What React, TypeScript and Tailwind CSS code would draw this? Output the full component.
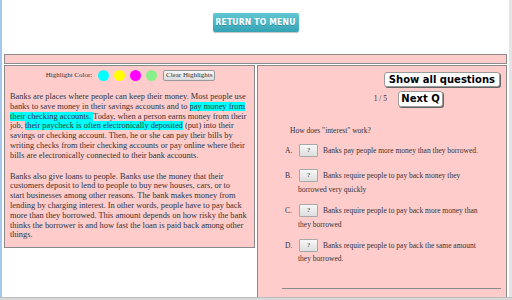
import React from 'react';

const serif = { fontFamily: '"Liberation Serif", "Times New Roman", serif' };

function QButton() {
  return (
    <span className="inline-block indent-0 w-[19px] h-[13px] align-top text-center leading-[11px] text-[7px] text-[#333] border border-[#a8a8a8] rounded-[1px] bg-gradient-to-b from-[#f7f7f7] to-[#dedede] mr-[5px]">
      ?
    </span>
  );
}

interface OptionProps {
  letter: string;
  text: string;
  mt: string;
}

function Option({ letter, text, mt }: OptionProps) {
  return (
    <div className={`${mt} pl-[40px] pr-[21px] indent-[-13px] text-[7.5px] leading-[13.5px] text-[#333]`}>
      <span className="inline-block indent-0 w-[14px]">{letter}</span>
      <QButton />
      {text}
    </div>
  );
}

export default function App() {
  const hlColors = ['bg-[#00ffff]', 'bg-[#ffff00]', 'bg-[#ff00ff]', 'bg-[#88f088]'];

  return (
    <div className="w-[512px] h-[300px] overflow-hidden flex flex-col bg-white" style={serif}>
      <div className="flex flex-1 min-h-0">
        {/* window frame */}
        <div className="w-[2px] bg-[#a6c6ea]" />
        <div className="w-[2px]" />

        <main className="flex-1 min-w-0 flex flex-col">
          {/* header */}
          <div className="h-[54px] flex justify-center pt-[13px]">
            <button
              className="w-[86px] h-[19px] rounded-[2px] bg-gradient-to-b from-[#62c6d4] to-[#34a4b5] shadow-[0_1px_1px_rgba(0,0,0,0.25)] text-white font-bold text-[8.5px] tracking-[0.2px] [text-shadow:0_1px_0_rgba(0,0,0,0.2)]"
              style={{ fontFamily: '"DejaVu Sans Condensed", "DejaVu Sans", sans-serif' }}
            >
              RETURN TO MENU
            </button>
          </div>

          {/* pink bar */}
          <div className="h-[10px] border border-[#8c8c8c] bg-[#ffcccc]" />

          {/* panels */}
          <div className="mt-[1px] flex gap-[2px] flex-1 min-h-0">
            {/* passage */}
            <div className="self-start w-[251px] border border-[#8a8a8a] bg-[#ffcccc] pl-[5px] pr-[3px] pt-[3px] pb-[7px] text-[#333]">
              <div className="flex items-center justify-center h-[13px]">
                <span className="text-[7px] mr-[6px]">Highlight Color:</span>
                {hlColors.map((c, i) => (
                  <span key={i} className={`inline-block w-[11px] h-[11px] rounded-full ${c} mr-[5px]`} />
                ))}
                <button className="ml-[1px] w-[52px] h-[11px] text-[7px] leading-[9px] text-[#333] border border-[#999] rounded-[2px] bg-gradient-to-b from-[#f6f6f6] to-[#dcdcdc]">
                  Clear Highlights
                </button>
              </div>

              <p className="mt-[10px] text-[8.4px] leading-[9.8px]">
                Banks are places where people can keep their money. Most people use banks to save money in their savings accounts and to{' '}
                <span className="bg-[#00ffff]">pay money from their checking accounts. </span>
                Today, when a person earns money from their job,{' '}
                <span className="bg-[#00ffff]">their paycheck is often electronically deposited</span>
                {' '}(put) into their savings or checking account. Then, he or she can pay their bills by writing checks from their checking accounts or pay online where their bills are electronically connected to their bank accounts.
              </p>
              <p className="mt-[11px] text-[8.4px] leading-[9.8px]">
                Banks also give loans to people. Banks use the money that their customers deposit to lend to people to buy new houses, cars, or to
                <br />
                start businesses among other reasons. The bank makes money from lending by charging interest. In other words, people have to pay back more than they borrowed. This amount depends on how risky the bank thinks the borrower is and how fast the loan is paid back among other things.
              </p>
            </div>

            {/* questions */}
            <div className="flex-1 min-w-0 overflow-hidden border border-b-0 border-[#8a8a8a] bg-[#ffcccc]">
              <div className="flex justify-end pr-[6px] mt-[6px]">
                <button
                  className="h-[15px] px-[4px] bg-white rounded-[3px] border border-[#9a9a9a] shadow-[1px_1px_0_#666] text-black font-bold text-[10px] leading-[13px]"
                  style={{ fontFamily: '"DejaVu Sans", Verdana, sans-serif' }}
                >
                  Show all questions
                </button>
              </div>
              <div className="flex items-center justify-end pr-[63px] mt-[4px] gap-[11px]">
                <span className="text-[7.5px] text-[#333]">1 / 5</span>
                <button
                  className="h-[16px] w-[45px] bg-white rounded-[3px] border border-[#9a9a9a] shadow-[1px_1px_0_#666] text-black font-bold text-[10px] leading-[14px]"
                  style={{ fontFamily: '"DejaVu Sans", Verdana, sans-serif' }}
                >
                  Next Q
                </button>
              </div>

              <div className="mt-[19px] pl-[32px] text-[7.5px] leading-[10px] text-[#333]">
                How does &quot;interest&quot; work?
              </div>

              <Option mt="mt-[8px]" letter="A." text="Banks pay people more money than they borrowed." />
              <Option mt="mt-[11.5px]" letter="B." text="Banks require people to pay back money they borrowed very quickly" />
              <Option mt="mt-[8px]" letter="C." text="Banks require people to pay back more money than they borrowed" />
              <Option mt="mt-[7.5px]" letter="D." text="Banks require people to pay back the same amount they borrowed." />

              <div className="mt-[22px] ml-[24px] mr-[5px] h-px bg-[#8a8a8a]" />
            </div>
          </div>
        </main>

        <div className="w-[2px]" />
        <div className="w-[3px] bg-[#e4e4e4]" />
      </div>
      <div className="h-[3px] bg-[#d8d8d8] border-t border-[#bcbcbc]" />
    </div>
  );
}
